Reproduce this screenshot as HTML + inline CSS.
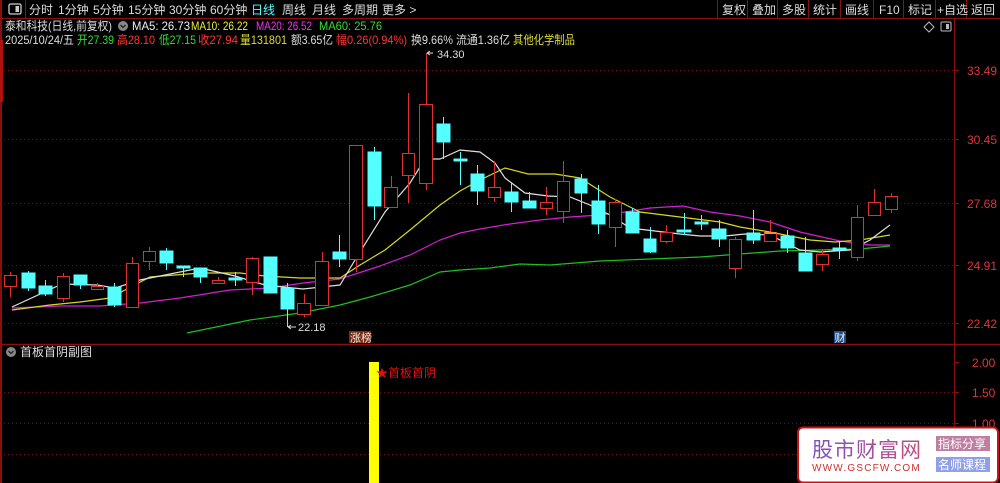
<!DOCTYPE html>
<html><head><meta charset="utf-8">
<style>
html,body{margin:0;padding:0;background:#000;width:1000px;height:483px;overflow:hidden}
svg{display:block}
text{font-family:"Liberation Sans","Noto Sans CJK SC",sans-serif}
</style></head><body>
<svg width="1000" height="483" viewBox="0 0 1000 483" xmlns="http://www.w3.org/2000/svg">
<rect width="1000" height="483" fill="#000"/>
<line x1="0" y1="18.5" x2="1000" y2="18.5" stroke="#8a1010" stroke-width="1"/>
<line x1="1" y1="0" x2="1" y2="483" stroke="#8a1010" stroke-width="2"/>
<rect x="0" y="40" width="3" height="62" fill="#b01010"/>
<line x1="25.5" y1="0" x2="25.5" y2="18" stroke="#8a1010"/>
<rect x="9" y="4" width="12" height="10" rx="1.5" fill="none" stroke="#ccc" stroke-width="1.3"/>
<rect x="15.5" y="6" width="3.5" height="6" fill="#ccc"/>
<g font-size="12" fill="#ddd">
<text x="29" y="14">分时</text><text x="58" y="14">1分钟</text><text x="93" y="14">5分钟</text>
<text x="128" y="14">15分钟</text><text x="169" y="14">30分钟</text><text x="210" y="14">60分钟</text>
<text x="251" y="14" fill="#5ff">日线</text><text x="282" y="14">周线</text><text x="312" y="14">月线</text>
<text x="342" y="14">多周期</text><text x="382" y="14">更多 &gt;</text>
</g>
<g stroke="#8a1010"><line x1="717.5" y1="0" x2="717.5" y2="18"/><line x1="747.5" y1="0" x2="747.5" y2="18"/><line x1="777.5" y1="0" x2="777.5" y2="18"/><line x1="808.5" y1="0" x2="808.5" y2="18"/><line x1="840.5" y1="0" x2="840.5" y2="18"/><line x1="873.5" y1="0" x2="873.5" y2="18"/><line x1="903.5" y1="0" x2="903.5" y2="18"/><line x1="935.5" y1="0" x2="935.5" y2="18"/><line x1="966.5" y1="0" x2="966.5" y2="18"/></g>
<g font-size="12" fill="#ddd">
<text x="722" y="14">复权</text><text x="752" y="14">叠加</text><text x="782" y="14">多股</text><text x="813" y="14">统计</text>
<text x="845" y="14">画线</text><text x="879" y="14">F10</text><text x="908" y="14">标记</text><text x="937" y="14">+自选</text><text x="971" y="14">返回</text>
</g>
<path d="M929 22 L934 27 L929 32 L924 27 Z" fill="none" stroke="#bbb"/>
<rect x="941" y="22" width="10" height="9" rx="1" fill="none" stroke="#bbb"/><rect x="946" y="24" width="3" height="5" fill="#bbb"/>
<g font-size="12">
<text x="5" y="30" fill="#ddd" textLength="107" lengthAdjust="spacingAndGlyphs">泰和科技(日线,前复权)</text>
<circle cx="123" cy="26" r="5" fill="#888"/><path d="M120.5 25 L123 27.5 L125.5 25" stroke="#222" fill="none" stroke-width="1.3"/>
<text x="132" y="30" fill="#eee" textLength="58" lengthAdjust="spacingAndGlyphs">MA5: 26.73</text>
<text x="191" y="30" fill="#ee3" textLength="57" lengthAdjust="spacingAndGlyphs">MA10: 26.22</text>
<text x="256" y="30" fill="#e3e" textLength="56" lengthAdjust="spacingAndGlyphs">MA20: 26.52</text>
<text x="319" y="30" fill="#3d3" textLength="63" lengthAdjust="spacingAndGlyphs">MA60: 25.76</text>
<text x="5" y="44" fill="#ddd" textLength="69" lengthAdjust="spacingAndGlyphs">2025/10/24/五</text>
<text x="77" y="44" fill="#3d3" textLength="37" lengthAdjust="spacingAndGlyphs">开27.39</text>
<text x="117" y="44" fill="#f33" textLength="38" lengthAdjust="spacingAndGlyphs">高28.10</text>
<text x="159" y="44" fill="#3d3" textLength="37" lengthAdjust="spacingAndGlyphs">低27.15</text>
<text x="198" y="44" fill="#f33" textLength="40" lengthAdjust="spacingAndGlyphs">收27.94</text>
<text x="240" y="44" fill="#dd3" textLength="47" lengthAdjust="spacingAndGlyphs">量131801</text>
<text x="291" y="44" fill="#ddd" textLength="42" lengthAdjust="spacingAndGlyphs">额3.65亿</text>
<text x="336" y="44" fill="#f33" textLength="71" lengthAdjust="spacingAndGlyphs">幅0.26(0.94%)</text>
<text x="411" y="44" fill="#ddd" textLength="99" lengthAdjust="spacingAndGlyphs">换9.66% 流通1.36亿</text>
<text x="513" y="44" fill="#dd3" textLength="62" lengthAdjust="spacingAndGlyphs">其他化学制品</text>
</g>
<line x1="954.5" y1="18" x2="954.5" y2="483" stroke="#8a1010"/>
<line x1="0" y1="344.5" x2="1000" y2="344.5" stroke="#8a1010" stroke-width="1.5"/>
<g stroke="#6a1010" stroke-dasharray="1,3">
<line x1="4" y1="70.5" x2="954" y2="70.5"/><line x1="4" y1="139.5" x2="954" y2="139.5"/><line x1="4" y1="203.5" x2="954" y2="203.5"/><line x1="4" y1="265.5" x2="954" y2="265.5"/><line x1="4" y1="323.5" x2="954" y2="323.5"/>
<line x1="4" y1="392.5" x2="954" y2="392.5"/><line x1="4" y1="423.5" x2="954" y2="423.5"/><line x1="4" y1="454.5" x2="954" y2="454.5"/>
</g>
<g stroke="#8a1010"><line x1="954" y1="70.5" x2="959" y2="70.5"/><line x1="954" y1="139.5" x2="959" y2="139.5"/><line x1="954" y1="203.5" x2="959" y2="203.5"/><line x1="954" y1="265.5" x2="959" y2="265.5"/><line x1="954" y1="323.5" x2="959" y2="323.5"/><line x1="954" y1="362.5" x2="959" y2="362.5"/><line x1="954" y1="392.5" x2="959" y2="392.5"/><line x1="954" y1="423.5" x2="959" y2="423.5"/></g>
<g font-size="12" fill="#e03535">
<text x="967" y="75">33.49</text><text x="967" y="144">30.45</text><text x="967" y="208">27.68</text><text x="967" y="270">24.91</text><text x="967" y="328">22.42</text>
<text x="972" y="367">2.00</text><text x="972" y="397">1.50</text><text x="972" y="428">1.00</text>
</g>
<g fill="none" stroke-width="1.2">
<polyline stroke="#1fbf1f" points="187,333 250,320 300,313 340,305 370,297 410,285 440,272 460,270 490,268 520,264 550,265 600,261 650,259 700,257 740,254 780,251 820,250 860,249 890,246"/>
<polyline stroke="#d020d0" points="12,308 60,306 100,306 140,303 180,298 230,290 270,288 303,283 340,279 380,266 410,255 440,240 460,233 480,229 510,224 540,220 570,217 600,215 625,212 650,208 683,206 710,212 740,216 770,222 800,232 840,241 870,245 890,245"/>
<polyline stroke="#d8d820" points="12,310 50,305 80,302 110,298 125,290 150,277 200,273 240,273 265,276 300,278 340,278 360,265 385,250 410,230 440,205 460,191 480,180 505,168 528,174 555,174 580,178 610,197 640,212 680,217 720,222 740,227 770,232 810,240 835,242 860,240 890,235"/>
<polyline stroke="#e0e0e0" points="12,307 62,284 97,285 115,288 140,280 200,268 235,276 265,285 303,289 340,285 355,260 385,212 410,183 425,159 440,159 460,150 480,152 495,163 505,178 525,193 548,196 570,197 590,205 610,215 630,228 655,231 680,234 700,236 725,236 745,234 770,235 800,250 820,252 850,250 870,240 890,225"/>
</g>
<g stroke-width="1">
<g stroke="#e03030" fill="#000">
<line x1="10.5" y1="272" x2="10.5" y2="297"/><rect x="4.5" y="275.5" width="12" height="11"/>
<line x1="63.5" y1="273" x2="63.5" y2="302"/><rect x="57.5" y="276.5" width="12" height="22"/>
<line x1="97.5" y1="283" x2="97.5" y2="290"/><rect x="91.5" y="286.5" width="12" height="3"/>
<line x1="132.5" y1="257" x2="132.5" y2="308"/><rect x="126.5" y="263.5" width="12" height="44"/>
<line x1="149.5" y1="247" x2="149.5" y2="270"/><rect x="143.5" y="251.5" width="12" height="10"/>
<line x1="218.5" y1="277" x2="218.5" y2="283"/><rect x="212.5" y="280.5" width="12" height="3"/>
<line x1="252.5" y1="257" x2="252.5" y2="295"/><rect x="246.5" y="258.5" width="12" height="24"/>
<line x1="304.5" y1="294" x2="304.5" y2="317"/><rect x="297.5" y="303.5" width="13" height="11"/>
<line x1="322.5" y1="252" x2="322.5" y2="305"/><rect x="315.5" y="261.5" width="13" height="44"/>
<line x1="356.5" y1="145" x2="356.5" y2="272"/><rect x="349.5" y="145.5" width="13" height="114"/>
<line x1="391.5" y1="176" x2="391.5" y2="207"/><rect x="384.5" y="187.5" width="13" height="20"/>
<line x1="408.5" y1="93" x2="408.5" y2="203"/><rect x="402.5" y="153.5" width="12" height="22"/>
<line x1="426.5" y1="53" x2="426.5" y2="190"/><rect x="419.5" y="104.5" width="13" height="79"/>
<line x1="494.5" y1="161" x2="494.5" y2="202"/><rect x="488.5" y="187.5" width="12" height="10"/>
<line x1="546.5" y1="187" x2="546.5" y2="215"/><rect x="540.5" y="202.5" width="12" height="6"/>
<line x1="563.5" y1="161" x2="563.5" y2="223"/><rect x="557.5" y="181.5" width="12" height="30"/>
<line x1="615.5" y1="199" x2="615.5" y2="247"/><rect x="609.5" y="202.5" width="12" height="25"/>
<line x1="666.5" y1="225" x2="666.5" y2="243"/><rect x="660.5" y="232.5" width="12" height="9"/>
<line x1="735.5" y1="237" x2="735.5" y2="278"/><rect x="729.5" y="239.5" width="12" height="29"/>
<line x1="770.5" y1="220" x2="770.5" y2="242"/><rect x="764.5" y="232.5" width="12" height="9"/>
<line x1="822.5" y1="249" x2="822.5" y2="271"/><rect x="816.5" y="254.5" width="12" height="10"/>
<line x1="857.5" y1="205" x2="857.5" y2="261"/><rect x="851.5" y="217.5" width="12" height="40"/>
<line x1="874.5" y1="189" x2="874.5" y2="215"/><rect x="868.5" y="202.5" width="12" height="13"/>
<line x1="891.5" y1="193" x2="891.5" y2="213"/><rect x="885.5" y="196.5" width="12" height="13"/>
</g>
<g stroke="#54ffff" fill="#54ffff">
<line x1="28.5" y1="271" x2="28.5" y2="291"/><rect x="22" y="273" width="13" height="15"/>
<line x1="45.5" y1="280" x2="45.5" y2="296"/><rect x="39" y="286" width="13" height="8"/>
<line x1="80.5" y1="275" x2="80.5" y2="289"/><rect x="74" y="275" width="13" height="10"/>
<line x1="114.5" y1="283" x2="114.5" y2="307"/><rect x="108" y="287" width="13" height="18"/>
<line x1="166.5" y1="248" x2="166.5" y2="270"/><rect x="160" y="251" width="13" height="12"/>
<line x1="183.5" y1="266" x2="183.5" y2="277"/><rect x="177" y="266" width="13" height="2"/>
<line x1="200.5" y1="268" x2="200.5" y2="283"/><rect x="194" y="268" width="13" height="9"/>
<line x1="235.5" y1="272" x2="235.5" y2="286"/><rect x="229" y="278" width="13" height="2"/>
<line x1="270.5" y1="257" x2="270.5" y2="293"/><rect x="264" y="257" width="13" height="36"/>
<line x1="287.5" y1="283" x2="287.5" y2="327"/><rect x="281" y="288" width="13" height="21"/>
<line x1="339.5" y1="235" x2="339.5" y2="267"/><rect x="333" y="252" width="13" height="7"/>
<line x1="374.5" y1="147" x2="374.5" y2="220"/><rect x="368" y="152" width="13" height="54"/>
<line x1="443.5" y1="117" x2="443.5" y2="159"/><rect x="437" y="124" width="13" height="18"/>
<line x1="460.5" y1="152" x2="460.5" y2="185"/><rect x="454" y="159" width="13" height="2"/>
<line x1="477.5" y1="165" x2="477.5" y2="205"/><rect x="471" y="174" width="13" height="17"/>
<line x1="511.5" y1="182" x2="511.5" y2="212"/><rect x="505" y="192" width="13" height="10"/>
<line x1="529.5" y1="192" x2="529.5" y2="208"/><rect x="523" y="201" width="13" height="7"/>
<line x1="581.5" y1="174" x2="581.5" y2="213"/><rect x="575" y="179" width="12" height="14"/>
<line x1="598.5" y1="185" x2="598.5" y2="234"/><rect x="592" y="201" width="13" height="23"/>
<line x1="632.5" y1="208" x2="632.5" y2="233"/><rect x="626" y="212" width="13" height="21"/>
<line x1="650.5" y1="227" x2="650.5" y2="253"/><rect x="644" y="239" width="12" height="13"/>
<line x1="684.5" y1="213" x2="684.5" y2="235"/><rect x="677" y="230" width="14" height="2"/>
<line x1="701.5" y1="215" x2="701.5" y2="230"/><rect x="695" y="222" width="13" height="2"/>
<line x1="719.5" y1="220" x2="719.5" y2="247"/><rect x="712" y="229" width="14" height="10"/>
<line x1="753.5" y1="210" x2="753.5" y2="244"/><rect x="747" y="233" width="13" height="7"/>
<line x1="787.5" y1="230" x2="787.5" y2="253"/><rect x="781" y="236" width="13" height="12"/>
<line x1="805.5" y1="237" x2="805.5" y2="271"/><rect x="799" y="253" width="13" height="18"/>
<line x1="839.5" y1="241" x2="839.5" y2="259"/><rect x="833" y="248" width="13" height="2"/>
</g>
</g>
<rect x="764.5" y="232" width="12" height="2" fill="#ff9020"/>
<g font-size="11" fill="#ddd">
<path d="M427 53 L433 53 M427 53 L430 51 M427 53 L430 55" stroke="#ddd" fill="none"/>
<text x="437" y="58">34.30</text>
<path d="M288 327 L296 327 M288 327 L291 325 M288 327 L291 329" stroke="#ddd" fill="none"/>
<text x="298" y="331">22.18</text>
</g>
<rect x="349" y="331" width="22" height="12" fill="#7a2a10"/>
<text x="350" y="341.5" font-size="11" fill="#eee">涨榜</text>
<rect x="834" y="331" width="12" height="12" fill="#1e4a8a"/>
<text x="834.5" y="341.5" font-size="11" fill="#eee">财</text>
<circle cx="11" cy="352" r="5" fill="#888"/><path d="M8.5 351 L11 353.5 L13.5 351" stroke="#222" fill="none" stroke-width="1.3"/>
<text x="20" y="356" font-size="12" fill="#ddd">首板首阴副图</text>
<rect x="369" y="362" width="10" height="121" fill="#ffff00"/>
<text x="376" y="377" font-size="12" fill="#e01010">★首板首阴</text>
<rect x="798" y="427.5" width="200" height="55" rx="5" fill="#fff" stroke="#d01010" stroke-width="2"/>
<defs><linearGradient id="g" x1="0" x2="1"><stop offset="0" stop-color="#8050c0"/><stop offset="1" stop-color="#c05080"/></linearGradient></defs>
<text x="812" y="457" font-size="21" fill="url(#g)" letter-spacing="1">股市财富网</text>
<text x="812" y="471" font-size="10" fill="#d03030" font-family="Liberation Serif,serif" letter-spacing="1.2">WWW.GSCFW.COM</text>
<rect x="936" y="436" width="54" height="15" fill="#c07ea0"/>
<text x="938" y="448" font-size="12" fill="#fff">指标分享</text>
<rect x="936" y="457" width="54" height="15" fill="#90a0e8"/>
<text x="938" y="469" font-size="12" fill="#fff">名师课程</text>
</svg>
</body></html>
